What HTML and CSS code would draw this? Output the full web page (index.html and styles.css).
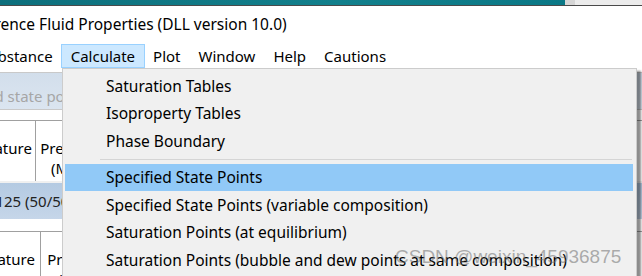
FILE: index.html
```html
<!DOCTYPE html>
<html lang="en">
<head>
  <meta charset="UTF-8" />
  <title>Reference Fluid Properties</title>
  <link rel="stylesheet" href="styles.css">
</head>
<body>

  <div class="screen">
    <!-- край заголовка вікна -->
    <div class="caption-strip">
      <div class="teal"></div>
      <div class="edge-btn"></div>
      <div class="rest"></div>
    </div>

    <div class="title">
      <span class="title-text">Reference Fluid Properties (DLL version 10.0)</span>
    </div>

    <nav class="menubar">
      <span class="menu-item first">Substance</span>
      <span class="menu-item active">Calculate</span>
      <span class="menu-item">Plot</span>
      <span class="menu-item">Window</span>
      <span class="menu-item">Help</span>
      <span class="menu-item">Cautions</span>
    </nav>

    <div class="workspace">
      <!-- вікно під меню -->
      <div class="doc">
        <div class="doc-caption"><span class="cut-a">Specified state points</span></div>
        <div class="grid-head">
          <div class="cell c1">Temperature<br>(K)</div>
          <div class="cell c2">Pressure<br>(MPa)</div>
        </div>
        <div class="doc-caption fluid"><span class="cut-b">R32/R125 (50/50)</span></div>
        <div class="grid-head second">
          <div class="cell c1">Temperature<br>(K)</div>
          <div class="cell c2">Pressure<br>(MPa)</div>
        </div>
      </div>

      <!-- випадаюче меню Calculate -->
      <ul class="dropdown">
        <li>Saturation Tables</li>
        <li>Isoproperty Tables</li>
        <li>Phase Boundary</li>
        <li class="sep"></li>
        <li class="hover">Specified State Points</li>
        <li>Specified State Points (variable composition)</li>
        <li>Saturation Points (at equilibrium)</li>
        <li>Saturation Points (bubble and dew points at same composition)</li>
      </ul>

      <div class="watermark">CSDN @weixin_45936875</div>
    </div>
  </div>

</body>
</html>
```

FILE: styles.css
```css
body {
  margin: 0;
  background-color: #fff;
  font-family: 'Noto Sans', 'Open Sans', sans-serif;
  font-size: 15px;
  color: #000;
}

.screen {
  width: 642px;
  height: 276px;
  overflow: hidden;
  display: flex;
  flex-direction: column;
}

.screen > * {
  flex-shrink: 0;
}

/* Верхня смуга */
.caption-strip {
  height: 5px;
  display: flex;
  border-bottom: 1px solid #4a4a4a;
}

.caption-strip .teal {
  width: 565px;
  background: linear-gradient(to right, #0d6f7c, #12808c 60%, #0a7886);
}

.caption-strip .edge-btn {
  width: 10px;
  background-color: #d6d6d6;
}

.caption-strip .rest {
  flex: 1;
  background-color: #ececec;
}

.title {
  height: 36px;
  display: flex;
  align-items: center;
  white-space: nowrap;
  font-size: 15.5px;
  padding-bottom: 1px;
  box-sizing: border-box;
}

.title-text {
  margin-left: -38px;
}

/* Рядок меню */
.menubar {
  height: 26px;
  display: flex;
  align-items: stretch;
  white-space: nowrap;
  padding-top: 2px;
  box-sizing: border-box;
}

.menu-item {
  padding: 0 8px;
  display: flex;
  align-items: center;
  border: 1px solid transparent;
}

.menu-item.first {
  margin-left: -29px;
}

.menu-item.active {
  background-color: #cce8ff;
  border-color: #99d1ff;
  padding: 0 9px;
  margin: 0 -1px;
}

.workspace {
  position: relative;
  flex: 1;
}

/* Вікно позаду */
.doc {
  padding-top: 4px;
  white-space: nowrap;
}

.doc-caption {
  height: 38px;
  border-top: 1px solid #c9c9c9;
  border-bottom: 1px solid #c9c9c9;
  background: linear-gradient(#d2deeb, #dbe5f0);
  color: #a6a6a6;
  display: flex;
  align-items: center;
  padding-top: 10px;
  box-sizing: border-box;
  overflow: hidden;
  margin-bottom: 10px;
}

.cut-a {
  margin-left: -60px;
}

.doc-caption.fluid {
  height: 38px;
  border-top: 2px solid #f0f0f0;
  border-bottom: none;
  background: linear-gradient(#b4cae2, #c6d6e9);
  color: #222;
  padding-top: 0;
  margin-bottom: 12px;
}

.cut-b {
  margin-left: -46px;
}

.grid-head {
  height: 60px;
  border-top: 1px solid #a0a0a0;
  display: flex;
  line-height: 20px;
  overflow: hidden;
}

.cell {
  padding-top: 17px;
  text-align: center;
  flex-shrink: 0;
  box-sizing: border-box;
}

.cell.c1 {
  width: 98px;
  margin-left: -62px;
  border-right: 1px solid #a0a0a0;
}

.cell.c2 {
  width: 70px;
}

.grid-head.second .c1 {
  width: 102px;
  margin-left: -61px;
}

.grid-head.second .c2 {
  padding-left: 4px;
}

/* Випадаюче меню */
.dropdown {
  position: absolute;
  top: 0;
  left: 62px;
  width: 575px;
  height: 230px;
  margin: 0;
  padding: 3px 2px 0 2px;
  list-style: none;
  background-color: #f0f0f0;
  border: 1px solid #cccccc;
  box-sizing: border-box;
  box-shadow: 4px 3px 2px rgba(0, 0, 0, 0.45);
  font-size: 15.5px;
  white-space: nowrap;
}

.dropdown li {
  height: 27.5px;
  display: flex;
  align-items: center;
  padding-left: 41px;
}

.dropdown li.sep {
  height: 9px;
  padding-left: 0;
  margin-left: 35px;
  margin-right: 2px;
}

.dropdown li.sep::after {
  content: '';
  flex: 1;
  height: 1px;
  background-color: #d5d5d5;
}

.dropdown li.hover {
  background-color: #91c9f7;
  margin-right: 1px;
}

.watermark {
  position: absolute;
  left: 395px;
  top: 178px;
  font-family: 'Liberation Sans', sans-serif;
  font-size: 19px;
  color: rgba(110, 110, 110, 0.55);
  white-space: nowrap;
}
```
